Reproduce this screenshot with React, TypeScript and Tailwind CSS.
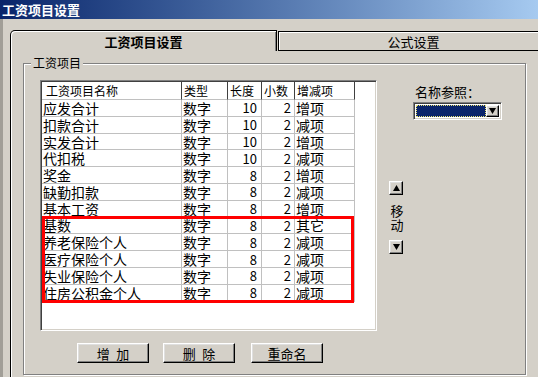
import React from "react";

const rows: string[][] = [
  ["应发合计", "数字", "10", "2", "增项"],
  ["扣款合计", "数字", "10", "2", "减项"],
  ["实发合计", "数字", "10", "2", "增项"],
  ["代扣税", "数字", "10", "2", "减项"],
  ["奖金", "数字", "8", "2", "增项"],
  ["缺勤扣款", "数字", "8", "2", "减项"],
  ["基本工资", "数字", "8", "2", "增项"],
  ["基数", "数字", "8", "2", "其它"],
  ["养老保险个人", "数字", "8", "2", "减项"],
  ["医疗保险个人", "数字", "8", "2", "减项"],
  ["失业保险个人", "数字", "8", "2", "减项"],
  ["住房公积金个人", "数字", "8", "2", "减项"],
];

const raised =
  "border border-t-white border-l-white border-r-black border-b-black shadow-[inset_-1px_-1px_0_#808080,inset_1px_1px_0_#dfdfdf] bg-[#d4d0c8]";

function Btn({ label }: { label: string }) {
  return (
    <div className={`w-[72px] h-[20px] flex items-center justify-center text-[13px] leading-[15px] text-black ${raised}`}>
      <span className="whitespace-pre">{label}</span>
    </div>
  );
}

function Tri({ up }: { up: boolean }) {
  return (
    <svg width="7" height="6" viewBox="0 0 7 6">
      {up ? <polygon points="3.5,0 7,6 0,6" fill="#000" /> : <polygon points="0,0 7,0 3.5,6" fill="#000" />}
    </svg>
  );
}

export default function App() {
  return (
    <div className="w-[538px] h-[377px] overflow-hidden bg-[#d4d0c8] font-[SimSun,'Noto_Sans_CJK_SC',sans-serif] text-black flex flex-col">
      <div className="h-[19px] shrink-0 bg-linear-to-r from-[#0a246a] to-[#a6caf0] flex items-center pl-[2px]">
        <span className="text-white font-bold text-[13px] leading-[15px]">工资项目设置</span>
      </div>
      <div className="flex flex-1 min-h-0">
        <div className="w-[10px] shrink-0 flex">
          <div className="w-[3px] bg-[#a19e97]" />
        </div>
        <div className="flex-1 flex flex-col min-w-0">
          <div className="h-[11px] shrink-0" />
          <div className="flex h-[21px] shrink-0">
            <div className="w-[267px] h-[21px] shrink-0 border-l border-t border-r border-black rounded-tl-[5px] shadow-[inset_1px_1px_0_#ffffff,inset_-1px_0_0_#808080] flex items-center justify-center">
              <span className="font-bold text-[13px] leading-[15px]">工资项目设置</span>
            </div>
            <div className="w-[270px] h-[20px] mt-[1px] ml-[1px] shrink-0 border-l border-t border-b border-black shadow-[inset_1px_1px_0_#ffffff] flex items-center justify-center">
              <span className="text-[13px] leading-[15px]">公式设置</span>
            </div>
          </div>
          <div className="flex-1 border-l border-black shadow-[inset_1px_0_0_#ffffff] pl-[12px] pt-[12px]">
            <div className="relative w-[503px] h-[312px] border border-[#808080] shadow-[1px_1px_0_#ffffff,inset_1px_1px_0_#ffffff] pl-[16px] pt-[16px] flex">
              <span className="absolute left-[7px] -top-[8px] bg-[#d4d0c8] px-[2px] text-[12px] leading-[14px]">工资项目</span>
              <div className="flex flex-col w-[337px] shrink-0">
                <div className="relative w-[337px] h-[251px] bg-white border border-t-[#808080] border-l-[#808080] border-r-white border-b-white shadow-[inset_1px_1px_0_#404040,inset_-1px_-1px_0_#d4d0c8] p-[1px]">
                  <div className="grid grid-cols-[140px_46px_34px_33px_60px] w-[313px]">
                    {["工资项目名称", "类型", "长度", "小数", "增减项"].map((h, i) => (
                      <div
                        key={h}
                        className={`h-[18px] flex items-center border-r border-r-[#404040] border-b border-b-[#c0c0c0] text-[12px] leading-[14px] ${i === 0 ? "pl-[4px]" : "pl-[2px]"}`}
                      >
                        {h}
                      </div>
                    ))}
                    {rows.map((r, ri) =>
                      r.map((c, ci) => (
                        <div
                          key={`${ri}-${ci}`}
                          className={`h-[16.8px] flex items-center border-r border-b border-[#c0c0c0] whitespace-nowrap ${
                            ci === 2
                              ? "justify-end pr-[4px] text-[13px] leading-[15px]"
                              : ci === 3
                              ? "justify-end pr-[3px] text-[13px] leading-[15px]"
                              : "pl-[1px] text-[14px] leading-[16px]"
                          }`}
                        >
                          {c}
                        </div>
                      ))
                    )}
                  </div>
                  <div className="absolute left-[1px] top-[135px] w-[312px] h-[87px] border-[3px] border-[#ff0000]" />
                </div>
                <div className="flex mt-[12px] ml-[37px]">
                  <Btn label={"增\u2002加"} />
                  <div className="w-[14px]" />
                  <Btn label={"删\u2002除"} />
                  <div className="w-[16px]" />
                  <Btn label="重命名" />
                </div>
              </div>
              <div className="ml-[12px] w-[14px] shrink-0 flex flex-col items-center pt-[101px]">
                <div className={`w-[14px] h-[14px] flex items-center justify-center ${raised}`}>
                  <Tri up />
                </div>
                <div className="mt-[9px] text-[13px] leading-[14px] w-[13px] ml-[2px]">移</div>
                <div className="text-[13px] leading-[14px] w-[13px] ml-[2px]">动</div>
                <div className={`mt-[8px] w-[14px] h-[14px] flex items-center justify-center ${raised}`}>
                  <Tri up={false} />
                </div>
              </div>
              <div className="ml-[10px] w-[90px] shrink-0 flex flex-col pt-[4px]">
                <div className="pl-[2px] text-[13px] leading-[15px]">名称参照：</div>
                <div className="mt-[3px] w-[89px] h-[18px] bg-white border border-t-[#808080] border-l-[#808080] border-r-white border-b-white shadow-[inset_1px_1px_0_#404040,inset_-1px_-1px_0_#d4d0c8] p-[2px] flex">
                  <div className="flex-1 bg-[#0a246a] border border-dotted border-[#e8e070]" />
                  <div className={`w-[13px] flex items-center justify-center ${raised}`}>
                    <Tri up={false} />
                  </div>
                </div>
              </div>
            </div>
          </div>
        </div>
      </div>
    </div>
  );
}
